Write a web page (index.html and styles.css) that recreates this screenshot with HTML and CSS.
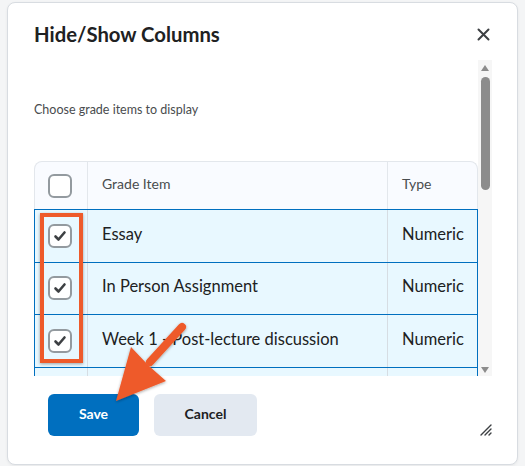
FILE: index.html
```html
<!DOCTYPE html>
<html>
<head>
<meta charset="utf-8">
<link rel="stylesheet" href="styles.css">
</head>
<body>
<div class="dialog">
  <div class="header">
    <h1 class="title">Hide/Show Columns</h1>
    <svg class="close" width="13" height="13" viewBox="0 0 13 13"><path d="M1.5 1.5 L11.5 11.5 M11.5 1.5 L1.5 11.5" stroke="#3d4043" stroke-width="2" stroke-linecap="round"/></svg>
  </div>
  <div class="scroll">
    <div class="content">
      <p class="desc">Choose grade items to display</p>
      <div class="grid">
        <div class="row head">
          <div class="cell c1"><span class="cb"></span></div>
          <div class="cell c2">Grade Item</div>
          <div class="cell c3">Type</div>
        </div>
        <div class="row sel">
          <div class="cell c1"><span class="cb"><svg width="20" height="20" viewBox="0 0 20 20"><path d="M5.5 10.5 L8.5 13.5 L14.5 6.5" fill="none" stroke="#3d4043" stroke-width="2.6" stroke-linecap="round" stroke-linejoin="round"/></svg></span></div>
          <div class="cell c2">Essay</div>
          <div class="cell c3">Numeric</div>
        </div>
        <div class="row sel">
          <div class="cell c1"><span class="cb"><svg width="20" height="20" viewBox="0 0 20 20"><path d="M5.5 10.5 L8.5 13.5 L14.5 6.5" fill="none" stroke="#3d4043" stroke-width="2.6" stroke-linecap="round" stroke-linejoin="round"/></svg></span></div>
          <div class="cell c2">In Person Assignment</div>
          <div class="cell c3">Numeric</div>
        </div>
        <div class="row sel">
          <div class="cell c1"><span class="cb"><svg width="20" height="20" viewBox="0 0 20 20"><path d="M5.5 10.5 L8.5 13.5 L14.5 6.5" fill="none" stroke="#3d4043" stroke-width="2.6" stroke-linecap="round" stroke-linejoin="round"/></svg></span></div>
          <div class="cell c2">Week 1 - Post-lecture discussion</div>
          <div class="cell c3">Numeric</div>
        </div>
        <div class="row sel">
          <div class="cell c1"></div>
          <div class="cell c2"></div>
          <div class="cell c3"></div>
        </div>
      </div>
    </div>
    <div class="scrollbar">
      <span class="arrow up"></span>
      <span class="thumb"></span>
      <span class="spacer"></span>
      <span class="arrow down"></span>
    </div>
  </div>
  <div class="footer">
    <button class="btn primary">Save</button>
    <button class="btn secondary">Cancel</button>
    <svg class="grip" width="12" height="12" viewBox="0 0 12 12"><path d="M1 11 L11 1 M5 11 L11 5 M9 11 L11 9" stroke="#3d4043" stroke-width="1.4" stroke-linecap="round"/></svg>
  </div>
</div>
<div class="highlight"></div>
<svg class="pointer" width="525" height="466" viewBox="0 0 525 466">
  <defs>
    <filter id="sh" x="-20%" y="-20%" width="140%" height="140%">
      <feDropShadow dx="0" dy="1" stdDeviation="1.5" flood-color="#000" flood-opacity="0.35"/>
    </filter>
  </defs>
  <g filter="url(#sh)" fill="#ee5a2a">
    <path d="M182 327 L150 362" stroke="#ee5a2a" stroke-width="8" stroke-linecap="round"/>
    <polygon points="116,401 131,347 149,366 166,381"/>
  </g>
</svg>
</body>
</html>
```

FILE: styles.css
```css
html, body {
  margin: 0;
  padding: 0;
}
body {
  width: 525px;
  height: 466px;
  background: #f4f5f6;
  font-family: Lato, "Noto Sans", sans-serif;
  color: #202122;
  overflow: hidden;
  position: relative;
}
.dialog {
  box-sizing: border-box;
  margin: 2px 0 0 7px;
  width: 511px;
  height: 463px;
  background: #fff;
  border: 1px solid #d8dce1;
  border-radius: 8px;
  display: flex;
  flex-direction: column;
  box-shadow: 0 1px 3px rgba(0,0,0,0.06);
}
.header {
  height: 57px;
  box-sizing: border-box;
  padding: 17px 27px 0 26px;
  display: flex;
  justify-content: space-between;
  align-items: flex-start;
  flex: none;
}
.title {
  margin: 0;
  font-size: 20.3px;
  line-height: 28px;
  font-weight: 700;
  color: #202122;
}
.close {
  margin-top: 8px;
}
.scroll {
  height: 316px;
  flex: none;
  display: flex;
  padding-right: 24px;
}
.content {
  width: 470px;
  box-sizing: border-box;
  padding-left: 26px;
  overflow: hidden;
}
.desc {
  margin: 41px 0 0;
  font-size: 12.5px;
  line-height: 18px;
  color: #494c4e;
}
.grid {
  margin-top: 42px;
  width: 444px;
}
.row {
  display: grid;
  grid-template-columns: 53px 300px 1fr;
  box-sizing: border-box;
}
.head {
  height: 48px;
  background: #f9fbff;
  border: 1px solid #e3e7ec;
  border-bottom: none;
  border-radius: 8px 8px 0 0;
  font-size: 14px;
  color: #494c4e;
}
.sel {
  height: 52.5px;
  background: #e8f8ff;
  border: 1px solid #006fbf;
  border-bottom: none;
  font-size: 16.5px;
  color: #202122;
}
.cell {
  display: flex;
  align-items: center;
  box-sizing: border-box;
}
.head .c2, .head .c3 {
  padding-bottom: 4px;
}
.sel .c2, .sel .c3 {
  padding-bottom: 4px;
}
.c1 {
  justify-content: flex-start;
  padding-left: 13px;
  border-right: 1px solid #d6dde3;
}
.c2 {
  padding-left: 14px;
  border-right: 1px solid #d6dde3;
}
.c3 {
  padding-left: 14px;
}
.head .c1, .head .c2 {
  border-right-color: #e3e7ec;
}
.cb {
  box-sizing: border-box;
  width: 24px;
  height: 24px;
  border: 2px solid #939a9f;
  border-radius: 6px;
  background: #fff;
  display: flex;
  align-items: center;
  justify-content: center;
}
.scrollbar {
  width: 14px;
  background: #f6f6f6;
  display: flex;
  flex-direction: column;
  align-items: center;
  padding: 5px 0 3px;
  box-sizing: border-box;
}
.arrow {
  width: 0;
  height: 0;
  border-left: 4.5px solid transparent;
  border-right: 4.5px solid transparent;
}
.up {
  border-bottom: 6px solid #8c8c8c;
}
.down {
  border-top: 6px solid #8c8c8c;
}
.thumb {
  margin-top: 6px;
  width: 9px;
  height: 113px;
  border-radius: 5px;
  background: #8c8c8c;
}
.spacer {
  flex: 1;
}
.footer {
  flex: 1;
  display: flex;
  align-items: flex-start;
  padding: 18px 25px 0 40px;
  gap: 15px;
}
.btn {
  height: 42px;
  border: none;
  border-radius: 6px;
  font-family: Lato, "Noto Sans", sans-serif;
  font-size: 14px;
  font-weight: 700;
  padding: 0 0 4px;
}
.primary {
  width: 91px;
  background: #006fbf;
  color: #fff;
}
.secondary {
  width: 103px;
  background: #e3e9f1;
  color: #202122;
}
.grip {
  margin-left: auto;
  margin-top: 30px;
}
.highlight {
  position: absolute;
  left: 40px;
  top: 213px;
  width: 43px;
  height: 150px;
  box-sizing: border-box;
  border: 4px solid #ee5a2a;
  box-shadow: 0 1px 3px rgba(0,0,0,0.35);
}
.pointer {
  position: absolute;
  left: 0;
  top: 0;
}
```
